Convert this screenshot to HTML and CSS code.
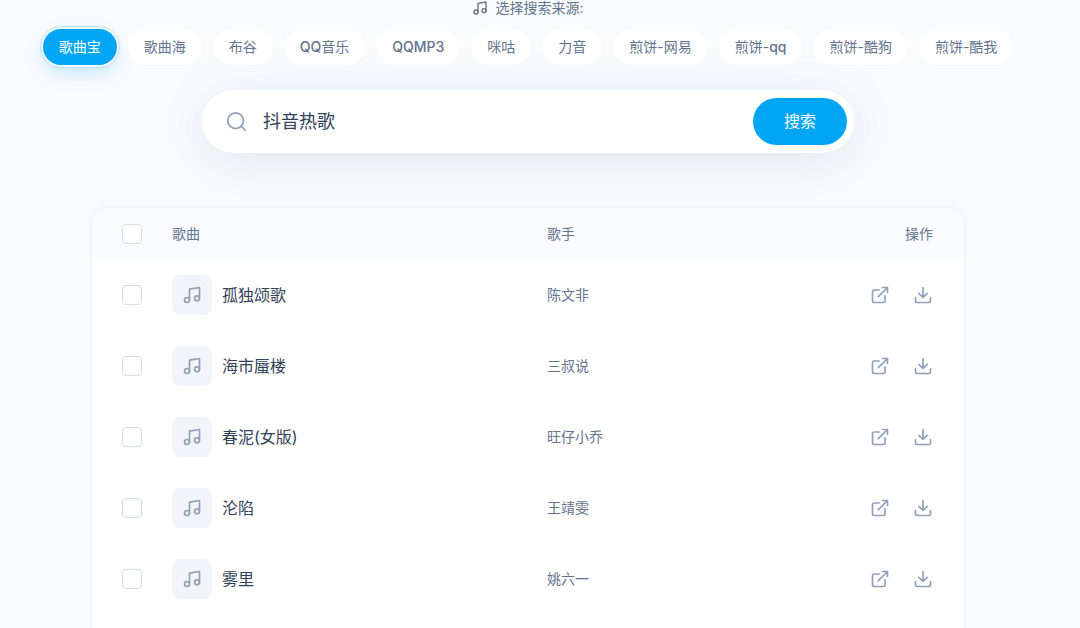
FILE: index.html
```html
<!DOCTYPE html>
<html lang="zh-CN">
<head>
  <meta charset="UTF-8">
  <title>音乐搜索</title>
  <meta name="viewport" content="width=device-width, initial-scale=1.0">
  <link rel="stylesheet" href="styles.css">
</head>
<body>
  <!-- shared icons -->
  <svg class="sprite" aria-hidden="true">
    <symbol id="music" viewBox="0 0 24 24"><path d="M9 18V5l12-2v13"/><circle cx="6" cy="18" r="3"/><circle cx="18" cy="16" r="3"/></symbol>
    <symbol id="search" viewBox="0 0 24 24"><circle cx="11" cy="11" r="9"/><path d="m22 22-4.5-4.5"/></symbol>
    <symbol id="open" viewBox="0 0 24 24"><path d="M15 3h6v6M10 14 21 3M18 13v6a2 2 0 0 1-2 2H5a2 2 0 0 1-2-2V8a2 2 0 0 1 2-2h6"/></symbol>
    <symbol id="download" viewBox="0 0 24 24"><path d="M21 15v4a2 2 0 0 1-2 2H5a2 2 0 0 1-2-2v-4M7 10l5 5 5-5M12 15V3"/></symbol>
  </svg>

  <main>
    <p class="source-label"><svg class="icon"><use href="#music"/></svg>选择搜索来源:</p>
    <div class="sources">
      <button class="source active">歌曲宝</button>
      <button class="source">歌曲海</button>
      <button class="source">布谷</button>
      <button class="source"><span class="latin">QQ</span>音乐</button>
      <button class="source"><span class="latin">QQMP3</span></button>
      <button class="source">咪咕</button>
      <button class="source">力音</button>
      <button class="source">煎饼-网易</button>
      <button class="source">煎饼-<span class="latin">qq</span></button>
      <button class="source">煎饼-酷狗</button>
      <button class="source">煎饼-酷我</button>
    </div>

    <form class="search">
      <svg class="icon"><use href="#search"/></svg>
      <input type="text" class="search-input" value="抖音热歌" aria-label="搜索歌曲">
      <button type="button" class="search-button">搜索</button>
    </form>

    <div class="card">
      <table class="songs">
        <thead>
          <tr>
            <th class="col-check"><input type="checkbox" class="check" aria-label="全选"></th>
            <th class="col-song">歌曲</th>
            <th class="col-artist">歌手</th>
            <th class="col-actions">操作</th>
          </tr>
        </thead>
        <tbody>
          <tr>
            <td><input type="checkbox" class="check" aria-label="选择 孤独颂歌"></td>
            <td><div class="song"><span class="cover"><svg class="icon"><use href="#music"/></svg></span>孤独颂歌</div></td>
            <td class="artist">陈文非</td>
            <td><div class="actions"><button class="action" aria-label="打开"><svg class="icon"><use href="#open"/></svg></button><button class="action" aria-label="下载"><svg class="icon"><use href="#download"/></svg></button></div></td>
          </tr>
          <tr>
            <td><input type="checkbox" class="check" aria-label="选择 海市蜃楼"></td>
            <td><div class="song"><span class="cover"><svg class="icon"><use href="#music"/></svg></span>海市蜃楼</div></td>
            <td class="artist">三叔说</td>
            <td><div class="actions"><button class="action" aria-label="打开"><svg class="icon"><use href="#open"/></svg></button><button class="action" aria-label="下载"><svg class="icon"><use href="#download"/></svg></button></div></td>
          </tr>
          <tr>
            <td><input type="checkbox" class="check" aria-label="选择 春泥(女版)"></td>
            <td><div class="song"><span class="cover"><svg class="icon"><use href="#music"/></svg></span>春泥(女版)</div></td>
            <td class="artist">旺仔小乔</td>
            <td><div class="actions"><button class="action" aria-label="打开"><svg class="icon"><use href="#open"/></svg></button><button class="action" aria-label="下载"><svg class="icon"><use href="#download"/></svg></button></div></td>
          </tr>
          <tr>
            <td><input type="checkbox" class="check" aria-label="选择 沦陷"></td>
            <td><div class="song"><span class="cover"><svg class="icon"><use href="#music"/></svg></span>沦陷</div></td>
            <td class="artist">王靖雯</td>
            <td><div class="actions"><button class="action" aria-label="打开"><svg class="icon"><use href="#open"/></svg></button><button class="action" aria-label="下载"><svg class="icon"><use href="#download"/></svg></button></div></td>
          </tr>
          <tr>
            <td><input type="checkbox" class="check" aria-label="选择 雾里"></td>
            <td><div class="song"><span class="cover"><svg class="icon"><use href="#music"/></svg></span>雾里</div></td>
            <td class="artist">姚六一</td>
            <td><div class="actions"><button class="action" aria-label="打开"><svg class="icon"><use href="#open"/></svg></button><button class="action" aria-label="下载"><svg class="icon"><use href="#download"/></svg></button></div></td>
          </tr>
        </tbody>
      </table>
    </div>
  </main>
</body>
</html>
```
FILE: styles.css
```css
* {
  box-sizing: border-box;
}

body {
  margin: 0;
  font-family: Inter, "Noto Sans CJK SC", sans-serif;
  font-size: 14px;
  line-height: 20px;
  color: #62748e;
  background: #fafbfd;
}

/* no visible scrollbar */
html {
  scrollbar-width: none;
}

main {
  padding: 0 24px 0 0;
}

button,
input {
  font: inherit;
}

button {
  border: none;
  cursor: pointer;
}

.sprite {
  display: none;
}

.icon {
  flex: none;
  width: 16px;
  height: 16px;
  fill: none;
  stroke: currentColor;
  stroke-width: 2;
  stroke-linecap: round;
  stroke-linejoin: round;
}

/* source picker */
.source-label {
  display: flex;
  justify-content: center;
  align-items: center;
  gap: 7px;
  margin: -2px 0 11px;
}

.sources {
  display: flex;
  flex-wrap: wrap;
  justify-content: center;
  gap: 11px;
}

.source {
  padding: 8px 16px;
  border-radius: 18px;
  color: #62748e;
  background: #fff;
  box-shadow: 0 0 2px rgba(49, 65, 88, 0.04);
}

.latin {
  font-weight: 500;
}

.source.active {
  color: #fff;
  background: #00a6f4;
  box-shadow: 0 0 0 2px #f3fbff, 0 0 0 3px #b5e2fc, 0 8px 18px rgba(0, 166, 244, 0.22);
}

/* search box */
.search {
  display: flex;
  align-items: center;
  max-width: 652px;
  margin: 25px auto 55px;
  padding: 8px 7px 8px 24px;
  border-radius: 32px;
  background: #fff;
  box-shadow: 0 0 48px rgba(0, 166, 244, 0.08), 0 14px 40px rgba(49, 65, 88, 0.06);
}

.search .icon {
  width: 21px;
  height: 21px;
  color: #90a1b9;
}

.search-input {
  flex: 1;
  min-width: 0;
  padding: 0 16px;
  border: none;
  outline: none;
  font-size: 18px;
  line-height: 28px;
  color: #314158;
  background: transparent;
}

.search-button {
  padding: 12px 31px;
  border-radius: 24px;
  font-size: 16px;
  line-height: 23px;
  color: #fff;
  background: #00a6f4;
}

/* results */
.card {
  max-width: 872px;
  margin: 0 auto;
  padding-bottom: 48px;
  overflow: hidden;
  border-radius: 16px;
  background: #fff;
  box-shadow: 0 0 4px rgba(49, 65, 88, 0.09);
}

.songs {
  width: 100%;
  table-layout: fixed;
  border-collapse: collapse;
}

.songs th {
  padding: 16px 0 15px;
  font-weight: 400;
  text-align: left;
  background: #fafcfe;
}

.songs td {
  height: 71px;
  padding: 0;
}

.songs .col-check {
  width: 80px;
}

.songs .col-song {
  width: 43%;
}

.songs .col-actions {
  width: 160px;
  padding-right: 31px;
  text-align: right;
}

.check {
  display: block;
  appearance: none;
  width: 20px;
  height: 20px;
  margin: 0 0 0 30px;
  border: 1px solid #d8dde4;
  border-radius: 4px;
  background: #fff;
}

.check:checked {
  border-color: #00a6f4;
  background: #00a6f4;
}

.song {
  display: flex;
  align-items: center;
  gap: 10px;
  font-size: 16px;
  color: #314158;
}

.cover {
  display: flex;
  justify-content: center;
  align-items: center;
  width: 40px;
  height: 40px;
  border-radius: 8px;
  color: #90a1b9;
  background: #f1f5f9;
}

.cover .icon {
  width: 20px;
  height: 20px;
}

.actions {
  display: flex;
  justify-content: flex-end;
  gap: 7px;
  padding-right: 23px;
}

.action {
  display: flex;
  padding: 8px;
  color: #90a1b9;
  background: transparent;
}

.action .icon {
  width: 20px;
  height: 20px;
}

.action:hover {
  color: #00a6f4;
}
```
